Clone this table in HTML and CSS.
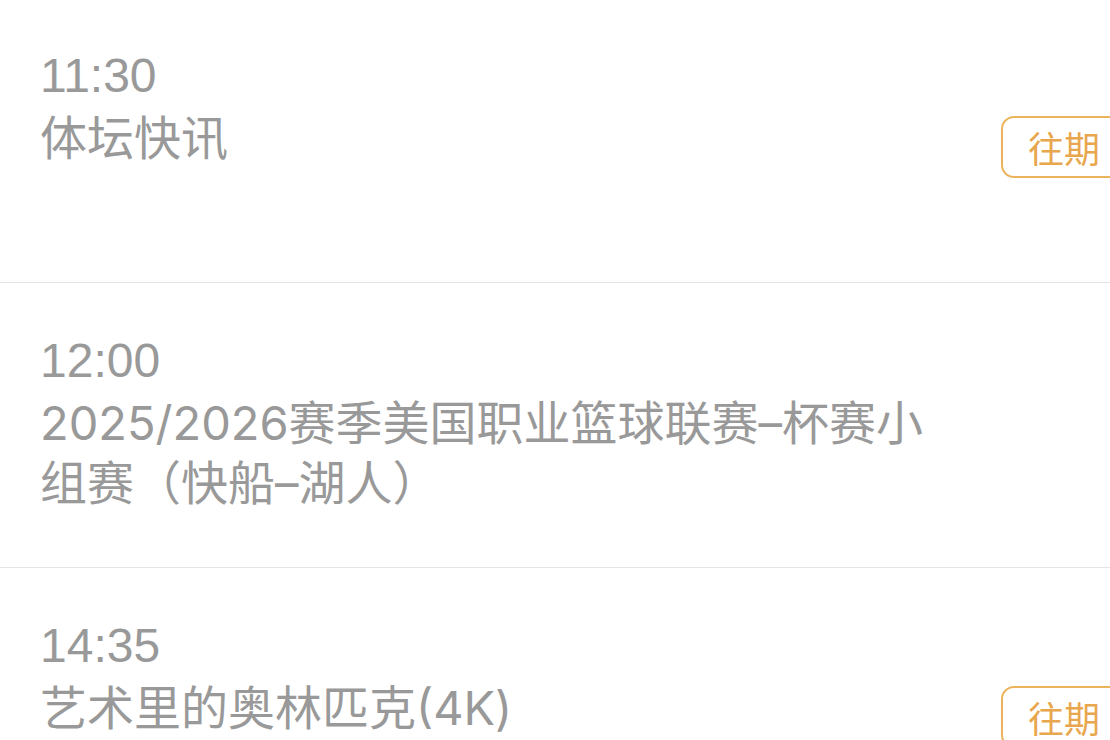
FILE: index.html
```html
<!DOCTYPE html>
<html lang="zh-CN">
<head>
    <meta charset="UTF-8">
    <meta name="viewport" content="width=device-width, initial-scale=1.0">
    <title>节目单</title>
    <link rel="stylesheet" href="styles.css">
</head>
<body>
    <div class="program-list">
        <div class="program">
            <div class="info">
                <div class="time">11:30</div>
                <div class="title">体坛快讯</div>
            </div>
            <button class="replay-btn">往期</button>
        </div>
        <div class="program">
            <div class="info">
                <div class="time">12:00</div>
                <div class="title">2025/2026赛季美国职业篮球联赛–杯赛小组赛（快船–湖人）</div>
            </div>
        </div>
        <div class="program">
            <div class="info">
                <div class="time">14:35</div>
                <div class="title">艺术里的奥林匹克(4K)</div>
            </div>
            <button class="replay-btn">往期</button>
        </div>
    </div>
</body>
</html>
```

FILE: styles.css
```css
body {
    margin: 0;
    background-color: #ffffff;
    overflow: hidden;
    font-family: "Noto Sans CJK SC", sans-serif;
}
.program-list {
    margin-top: -2px;
}
.program {
    display: flex;
    align-items: flex-start;
    min-height: 285px;
    box-sizing: border-box;
    padding: 46px 0 0 40px;
    border-bottom: 1px solid #e4e4e4;
}
.info {
    width: 900px;
}
.time {
    font-family: "Liberation Sans", sans-serif;
    font-size: 48px;
    line-height: 64px;
    color: #999999;
}
.title {
    font-family: "Inter", "Noto Sans CJK SC", sans-serif;
    font-size: 47px;
    line-height: 60px;
    color: #999999;
}
.replay-btn {
    margin: 72px -20px 0 auto;
    padding: 0 28px 0 25px;
    height: 62px;
    font-family: "Noto Sans CJK SC", sans-serif;
    font-size: 36px;
    color: #e8a74e;
    background-color: #ffffff;
    border: 2px solid #ebb45c;
    border-radius: 13px;
    white-space: nowrap;
}
```
